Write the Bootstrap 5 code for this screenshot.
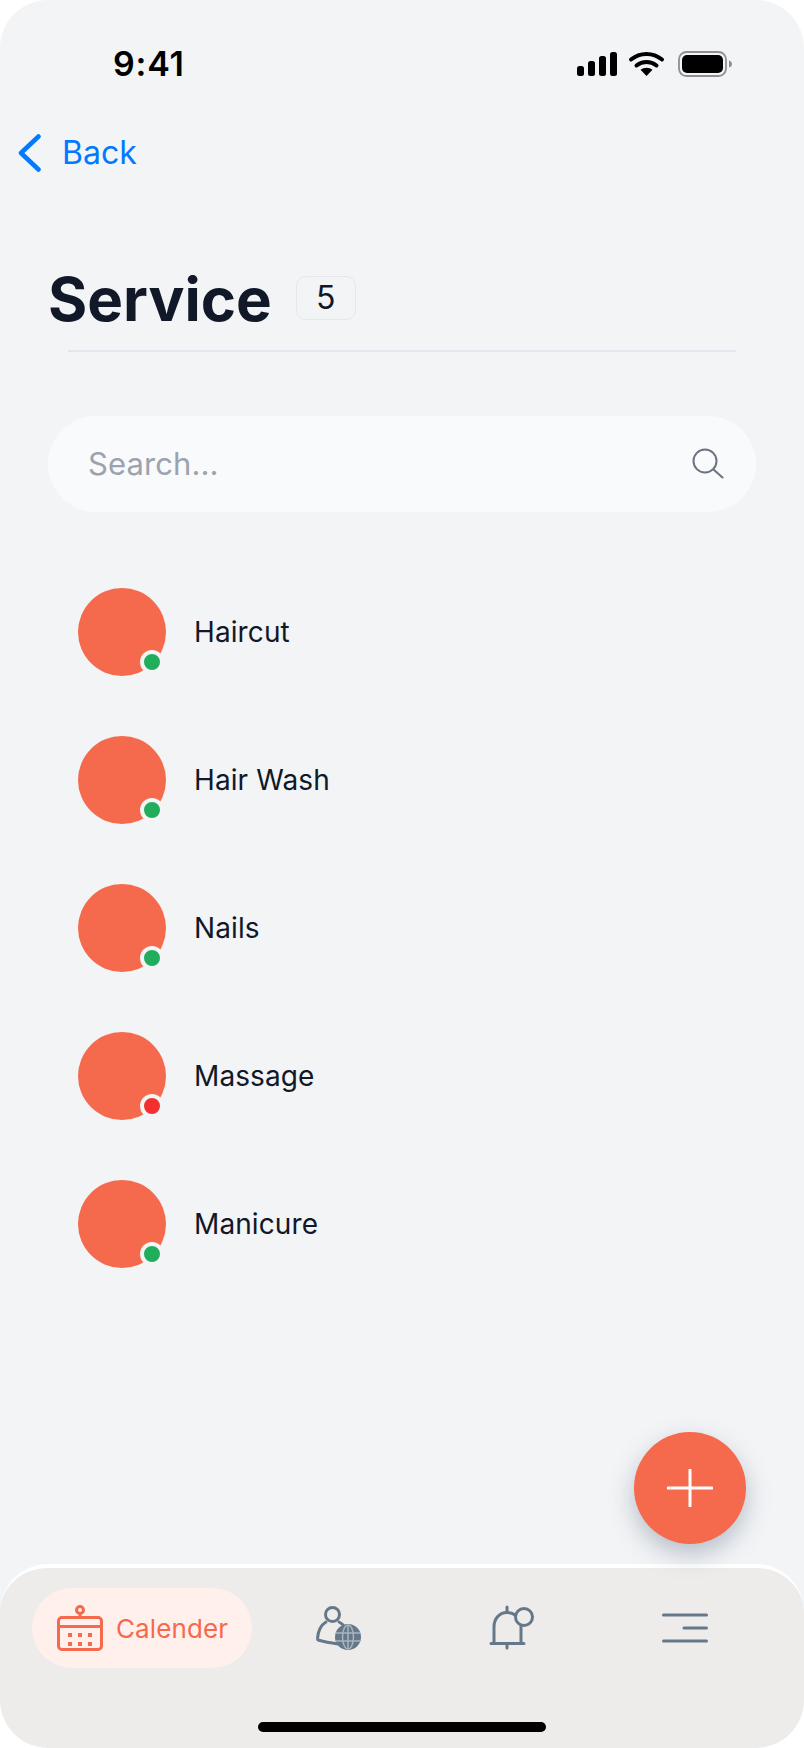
<!DOCTYPE html>
<html lang="en">
<head>
  <meta charset="UTF-8">
  <title>Service</title>
  <link href="https://cdn.jsdelivr.net/npm/bootstrap@5.3.0/dist/css/bootstrap.min.css" rel="stylesheet">
  <style>
    body {
      font-family: 'Inter', sans-serif;
      background-color: #fff;
      margin: 0;
      color: #111827;
    }

    .phone {
      height: 1748px;
      background-color: #f3f4f6;
      border-radius: 48px;
      overflow: hidden;
    }

    .status-row {
      height: 130px;
      padding: 44px 71px 0 113px;
    }

    .status-time {
      font-size: 34px;
      font-weight: 600;
      line-height: 40px;
      letter-spacing: .8px;
      color: #000;
    }

    .status-icons {
      margin-top: 6px;
    }

    .back-link {
      padding-left: 18px;
      height: 46px;
      color: #007aff;
      font-size: 32px;
      line-height: 46px;
      gap: 21px;
      text-decoration: none;
    }

    .title-row {
      margin-top: 87px;
      padding-left: 48px;
      height: 72px;
      gap: 24px;
    }

    .title-row h1 {
      font-size: 60px;
      font-weight: 700;
      line-height: 72px;
      margin: 0;
    }

    .count-chip {
      width: 60px;
      height: 44px;
      margin-bottom: 2px;
      border: 1px solid #e5e7eb;
      border-radius: 10px;
      background-color: #f3f4f6;
      font-size: 32px;
      line-height: 1;
    }

    .title-rule {
      margin: 15px 68px 0;
      height: 2px;
      background-color: #e2e8f0;
    }

    .search-box {
      margin: 64px 48px 0;
      height: 96px;
      padding: 0 32px 0 40px;
      background-color: #f9fafb;
      border-radius: 48px;
    }

    .search-box .form-control {
      padding: 0;
      font-size: 31px;
      letter-spacing: .1px;
      background: transparent;
      border: 0;
      box-shadow: none;
      color: #111827;
    }

    .search-box .form-control::placeholder {
      color: #9ca3af;
      opacity: 1;
    }

    .service-list {
      margin: 76px 0 0;
      padding: 0 0 0 78px;
      list-style: none;
    }

    .service-item {
      height: 88px;
      margin-bottom: 60px;
      gap: 28px;
      font-size: 28px;
      font-weight: 400;
      letter-spacing: .1px;
    }

    .service-pic {
      width: 88px;
      height: 88px;
      background-color: #f56a4d;
      border-radius: 50%;
    }

    .state-dot {
      position: absolute;
      right: 2px;
      bottom: 2px;
      width: 24px;
      height: 24px;
      border: 4px solid #f3f4f6;
      border-radius: 50%;
    }

    .state-on { background-color: #22ad5c; }
    .state-off { background-color: #f23030; }

    .add-btn {
      position: absolute;
      left: 634px;
      top: 1432px;
      width: 112px;
      height: 112px;
      padding: 0;
      background-color: #f56a4d;
      border: 0;
      border-radius: 50%;
      box-shadow: 0 10px 24px rgba(100, 116, 139, .42);
    }

    .tab-bar {
      height: 184px;
      margin-top: auto;
      padding: 20px 32px 0;
      background-color: #eeeceb;
      border-top: 4px solid #fff;
      border-radius: 48px;
    }

    .tab-active {
      width: 220px;
      height: 80px;
      flex: none;
      gap: 12px;
      padding-left: 24px;
      background-color: #fff0ec;
      border-radius: 40px;
      color: #f56a4d;
      font-size: 26px;
      letter-spacing: .1px;
      text-decoration: none;
    }

    .tab-plain {
      flex: 1 1 0;
      height: 80px;
    }

    .home-bar {
      position: absolute;
      left: 258px;
      top: 1722px;
      width: 288px;
      height: 10px;
      background-color: #000;
      border-radius: 5px;
    }
  </style>
</head>
<body>

<div class="phone position-relative d-flex flex-column">

  <!-- status bar -->
  <div class="status-row d-flex justify-content-between align-items-start flex-shrink-0">
    <span class="status-time">9:41</span>
    <svg width="156" height="28" viewBox="0 0 156 28" class="status-icons flex-shrink-0">
      <g fill="#000">
        <rect x="0" y="16" width="7" height="10" rx="2.500"/>
        <rect x="11" y="11" width="7" height="15" rx="2.500"/>
        <rect x="22" y="6" width="7" height="20" rx="2.500"/>
        <rect x="33" y="2" width="7" height="24" rx="2.500"/>
        <path d="M69.500 26l-6-6.200c3.400-2.700 8.600-2.700 12 0z"/>
      </g>
      <g fill="none" stroke="#000" stroke-width="4" stroke-linecap="round">
        <path d="M54 9.500c9-7.500 22-7.500 31 0"/>
        <path d="M59.500 15.500c5.800-4.700 14.200-4.700 20 0"/>
      </g>
      <rect x="102" y="2" width="47" height="24" rx="7.500" fill="none" stroke="#8e8e93" stroke-width="1.800"/>
      <rect x="105" y="5" width="41" height="18" rx="5" fill="#000"/>
      <path d="M152 10.500c2 .5 3 2 3 3.500s-1 3-3 3.500z" fill="#8e8e93"/>
    </svg>
  </div>

  <a href="#" class="back-link d-flex align-items-center flex-shrink-0">
    <svg width="23" height="38" viewBox="0 0 23 38" class="flex-shrink-0">
      <path d="M20.500 2.500L3 19l17.500 16.500" fill="none" stroke="#007aff" stroke-width="4.500" stroke-linecap="round" stroke-linejoin="round"/>
    </svg>
    <span>Back</span>
  </a>

  <div class="title-row d-flex align-items-center flex-shrink-0">
    <h1>Service</h1>
    <span class="count-chip d-flex align-items-center justify-content-center">5</span>
  </div>
  <div class="title-rule flex-shrink-0"></div>

  <div class="search-box d-flex align-items-center flex-shrink-0">
    <input type="text" class="form-control" placeholder="Search...">
    <svg width="32" height="32" viewBox="0 0 32 32" class="flex-shrink-0">
      <circle cx="13" cy="13" r="11.500" fill="none" stroke="#6b7280" stroke-width="2"/>
      <path d="M21.500 21.500l9 8" stroke="#6b7280" stroke-width="2" stroke-linecap="round"/>
    </svg>
  </div>

  <ul class="service-list" id="lista-servicios"></ul>

  <button class="add-btn d-flex align-items-center justify-content-center" type="button" aria-label="Add">
    <svg width="46" height="38" viewBox="0 0 46 38">
      <path d="M1 19h44M23 1v36" stroke="#fff" stroke-width="3" stroke-linecap="round"/>
    </svg>
  </button>

  <!-- bottom tabs -->
  <nav class="tab-bar d-flex align-items-start flex-shrink-0">
    <a href="#" class="tab-active d-flex align-items-center">
      <svg width="48" height="46" viewBox="0 0 48 46" class="flex-shrink-0">
        <g fill="none" stroke="#f56a4d" stroke-width="3">
          <rect x="2.500" y="12.500" width="43" height="32" rx="3.500"/>
          <path d="M2.500 21.500h43"/>
          <circle cx="24" cy="5" r="3.500"/>
          <path d="M24 8.500v4"/>
        </g>
        <g fill="#f56a4d">
          <rect x="12" y="28" width="4" height="4"/><rect x="22" y="28" width="4" height="4"/><rect x="32" y="28" width="4" height="4"/>
          <rect x="12" y="37" width="4" height="4"/><rect x="22" y="37" width="4" height="4"/><rect x="32" y="37" width="4" height="4"/>
        </g>
      </svg>
      <span>Calender</span>
    </a>
    <a href="#" class="tab-plain d-flex align-items-center justify-content-center" aria-label="Clients">
      <svg width="46" height="46" viewBox="0 0 46 46">
        <circle cx="16.500" cy="9.500" r="7" fill="none" stroke="#64788a" stroke-width="3"/>
        <path d="M10 17C5 20 2 27 1.500 33.500c0 1 .5 1.500 1.500 1.800C9 37 15 38 22 39" fill="none" stroke="#64788a" stroke-width="3" stroke-linecap="round"/>
        <path d="M23 17c1.500 .7 3 1.800 4 3" fill="none" stroke="#64788a" stroke-width="3" stroke-linecap="round"/>
        <circle cx="32" cy="32" r="13" fill="#64788a"/>
        <g fill="none" stroke="#a9b4bd" stroke-width="1.500">
          <ellipse cx="32" cy="32" rx="5.500" ry="12"/>
          <path d="M32 20v24M20 28h24M20 36h24"/>
        </g>
      </svg>
    </a>
    <a href="#" class="tab-plain d-flex align-items-center justify-content-center" aria-label="Alerts">
      <svg width="46" height="46" viewBox="0 0 46 46">
        <g fill="none" stroke="#64788a" stroke-width="3" stroke-linecap="round">
          <path d="M5 38V22C5 13 11 7.500 18 7.500S32 13 32 22v16"/>
          <path d="M2 38.500h33M18 2v5M18 39v4"/>
        </g>
        <circle cx="35" cy="12" r="8.500" fill="#eeeceb" stroke="#64788a" stroke-width="3"/>
      </svg>
    </a>
    <a href="#" class="tab-plain d-flex align-items-center justify-content-center" aria-label="Menu">
      <svg width="46" height="30" viewBox="0 0 46 30">
        <path d="M1.500 2h43M22 15h22.500M1.500 28h43" fill="none" stroke="#64788a" stroke-width="3" stroke-linecap="round"/>
      </svg>
    </a>
  </nav>

  <div class="home-bar"></div>
</div>

<script src="https://cdn.jsdelivr.net/npm/bootstrap@5.3.0/dist/js/bootstrap.bundle.min.js"></script>
<script>
  const servicios = [
    { nombre: 'Haircut', activo: true },
    { nombre: 'Hair Wash', activo: true },
    { nombre: 'Nails', activo: true },
    { nombre: 'Massage', activo: false },
    { nombre: 'Manicure', activo: true }
  ];

  document.getElementById('lista-servicios').innerHTML = servicios.map(s => `
    <li class="service-item d-flex align-items-center">
      <span class="service-pic position-relative flex-shrink-0">
        <span class="state-dot ${s.activo ? 'state-on' : 'state-off'}"></span>
      </span>
      <span>${s.nombre}</span>
    </li>
  `).join('');
</script>
</body>
</html>
